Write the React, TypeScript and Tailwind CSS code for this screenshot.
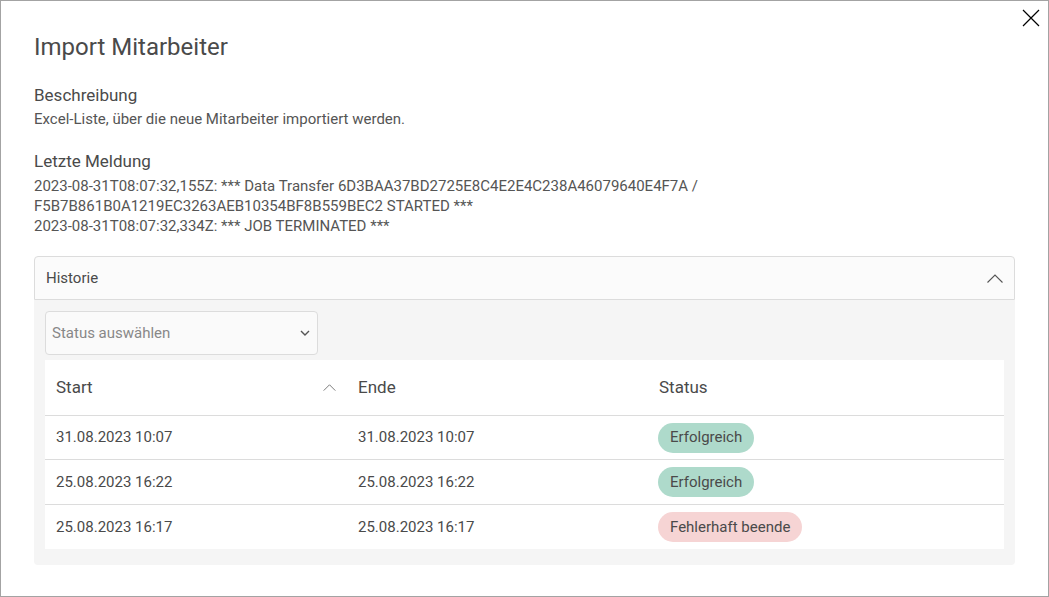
const rows = [
  { start: '31.08.2023 10:07', end: '31.08.2023 10:07', ok: true, h: 'h-[44px] border-b border-[#dcdcdc]' },
  { start: '25.08.2023 16:22', end: '25.08.2023 16:22', ok: true, h: 'h-[45px] border-b border-[#dcdcdc]' },
  { start: '25.08.2023 16:17', end: '25.08.2023 16:17', ok: false, h: 'h-[44px]' },
];

function ChevronUp({ className }: { className?: string }) {
  return (
    <svg viewBox="0 0 16 9" className={className} fill="none" stroke="currentColor" strokeWidth="1.1">
      <path d="M0.5 8.5L8 1l7.5 7.5" />
    </svg>
  );
}

export default function App() {
  return (
    <div
      className="relative h-[597px] w-[1049px] border border-[#a3a3a3] bg-white px-[33px] pt-[30px] text-[#555]"
      style={{ fontFamily: 'Roboto, "Liberation Sans", sans-serif' }}
    >
      {/* Close button */}
      <button className="absolute right-[8px] top-[8px] h-[18px] w-[18px] text-black">
        <svg viewBox="0 0 18 18" fill="none" stroke="currentColor" strokeWidth="1.2">
          <path d="M1 1l16 16M17 1L1 17" />
        </svg>
      </button>

      <h1 className="text-[24px] leading-[32px] text-[#4a4a4a]">Import Mitarbeiter</h1>

      <h2 className="mt-[20px] text-[17px] leading-[24px] text-[#4a4a4a]">Beschreibung</h2>
      <p className="mt-[2px] text-[15px] leading-[20px]">
        Excel-Liste, über die neue Mitarbeiter importiert werden.
      </p>

      <h2 className="mt-[20px] text-[17px] leading-[24px] text-[#4a4a4a]">Letzte Meldung</h2>
      <p className="mt-[3px] w-[720px] text-[15px] leading-[20px]">
        2023-08-31T08:07:32,155Z: *** Data Transfer 6D3BAA37BD2725E8C4E2E4C238A46079640E4F7A /
        F5B7B861B0A1219EC3263AEB10354BF8B559BEC2 STARTED ***
        <br />
        2023-08-31T08:07:32,334Z: *** JOB TERMINATED ***
      </p>

      {/* Historie accordion */}
      <div className="mt-[20px]">
        <div className="flex h-[44px] items-center justify-between rounded-t-[4px] border border-[#dcdcdc] bg-[#fbfbfb] pl-[11px] pr-[11px]">
          <span className="text-[15px] text-[#4a4a4a]">Historie</span>
          <ChevronUp className="h-[9px] w-[16px] text-[#555]" />
        </div>
        <div className="rounded-b-[4px] bg-[#f5f5f5] px-[11px] pb-[16px] pt-[11px]">
          <div className="flex h-[44px] w-[273px] items-center justify-between rounded-[4px] border border-[#dcdcdc] bg-[#fafafa] pl-[6px] pr-[7px]">
            <span className="text-[15px] text-[#888]">Status auswählen</span>
            <svg viewBox="0 0 10 6" className="h-[6px] w-[10px] text-[#555]" fill="none" stroke="currentColor" strokeWidth="1.4">
              <path d="M1 1l4 4 4-4" />
            </svg>
          </div>

          <div className="mt-[5px] bg-white">
            <div className="grid h-[56px] grid-cols-[302px_301px_1fr] items-center border-b border-[#dcdcdc] text-[17px] text-[#4a4a4a]">
              <div className="flex items-center justify-between pl-[11px] pr-[11px]">
                <span>Start</span>
                <ChevronUp className="h-[7px] w-[13px] text-[#666]" />
              </div>
              <div className="pl-[11px]">Ende</div>
              <div className="pl-[11px]">Status</div>
            </div>
            {rows.map((r, i) => (
              <div
                key={i}
                className={`grid grid-cols-[302px_301px_1fr] items-center text-[15px] text-[#4a4a4a] ${r.h}`}
              >
                <div className="pl-[11px]">{r.start}</div>
                <div className="pl-[11px]">{r.end}</div>
                <div className="pl-[10px]">
                  <span
                    className={`inline-flex h-[30px] items-center rounded-full px-[12px] ${
                      r.ok ? 'bg-[#aedacb]' : 'bg-[#f6d4d4]'
                    }`}
                  >
                    {r.ok ? 'Erfolgreich' : 'Fehlerhaft beende'}
                  </span>
                </div>
              </div>
            ))}
          </div>
        </div>
      </div>
    </div>
  );
}
